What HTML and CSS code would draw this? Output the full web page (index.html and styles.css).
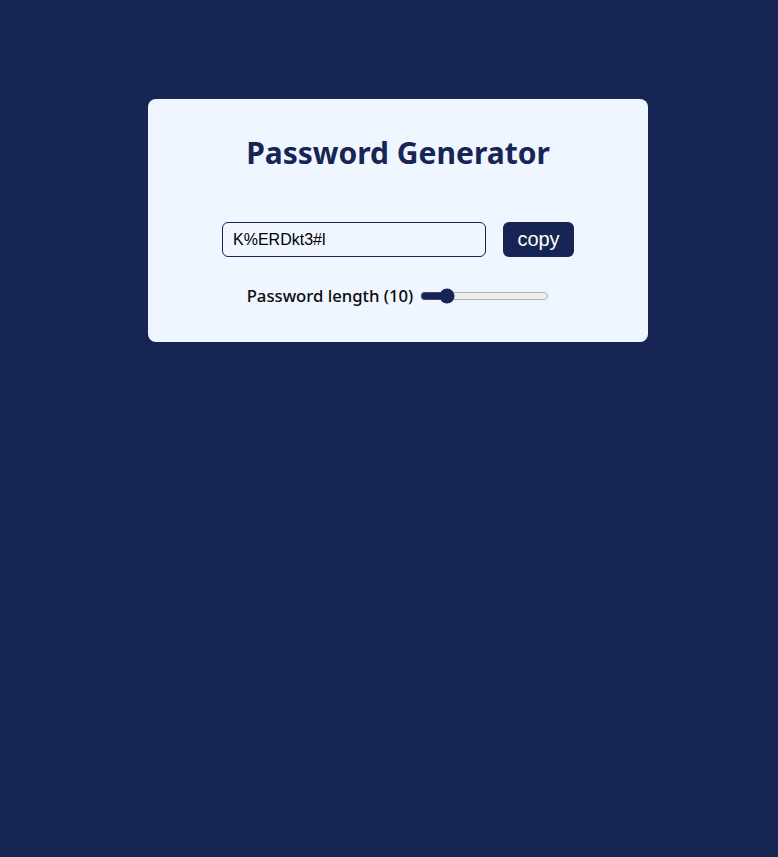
FILE: index.html
```
<!DOCTYPE html>
<html lang="en">
<head>
<meta charset="utf-8">
<title>Password Generator</title>
<link rel="stylesheet" href="styles.css">
</head>
<body>
<main class="page">
  <section class="card">
    <h1 class="title">Password Generator</h1>
    <div class="row">
      <input class="password" type="text" value="K%ERDkt3#l" readonly>
      <button class="copy">copy</button>
    </div>
    <div class="length-row">
      <label class="length-label" for="len">Password length (10)</label>
      <input id="len" class="slider" type="range" min="6" max="30" value="10">
    </div>
  </section>
</main>
</body>
</html>
```
FILE: styles.css
```
html, body {
  margin: 0;
  padding: 0;
  background: #172554;
  min-height: 100%;
}
.page {
  display: flex;
  justify-content: center;
  padding: 99px 0 0 18px;
}
.card {
  width: 500px;
  box-sizing: border-box;
  background: #eff6ff;
  border-radius: 8px;
  padding: 26px 0 35px;
  display: flex;
  flex-direction: column;
  align-items: center;
}
.title {
  margin: 0 0 41px;
  font-family: "Noto Sans", "Open Sans", sans-serif;
  font-weight: 700;
  font-size: 30px;
  line-height: 56px;
  color: #172554;
}
.row {
  display: flex;
  gap: 17px;
  margin-bottom: 26px;
}
.password {
  width: 264px;
  height: 35px;
  box-sizing: border-box;
  border: 1px solid #172554;
  border-radius: 6px;
  background: #eff6ff;
  padding: 0 10px;
  font-family: "Liberation Sans", Arial, sans-serif;
  font-size: 16px;
  color: #000;
  outline: none;
}
.copy {
  width: 71px;
  height: 35px;
  border: none;
  border-radius: 6px;
  background: #172554;
  color: #fff;
  font-family: "Liberation Sans", Arial, sans-serif;
  font-size: 20px;
  padding: 0;
  cursor: pointer;
}
.length-row {
  display: flex;
  align-items: center;
  gap: 7px;
  height: 24px;
}
.length-label {
  font-family: "Noto Sans", "Open Sans", sans-serif;
  font-weight: 500;
  font-size: 16.7px;
  color: #0a0a0a;
}
.slider {
  width: 129px;
  margin: 2px 0 0;
  accent-color: #172554;
}
```
